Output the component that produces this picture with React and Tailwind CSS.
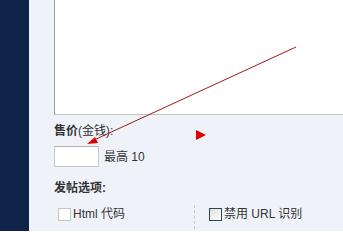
export default function App() {
  const font = { fontFamily: '"Liberation Sans", "Noto Sans CJK SC", sans-serif' };
  return (
    <div className="relative flex w-[343px] h-[231px] overflow-hidden text-[12px] text-[#333]" style={font}>
      <div className="w-[29px] shrink-0 bg-[#0f2247]" />
      <div className="flex-1 bg-[#eff3f9] pl-[25px] flex flex-col">
        <div className="h-[115px] w-[320px] shrink-0 bg-white border-l border-l-[#9a9a9a] border-b border-b-[#c6c6c6]" />
        <div className="mt-[9px] h-[14px] leading-[14px] flex items-center">
          <span className="font-bold">售价</span>
          <span>(金钱):</span>
        </div>
        <div className="mt-[8px] flex items-center">
          <div className="w-[45px] h-[21px] bg-white border border-[#c8c8c8] border-t-[#b0b0b0]" />
          <span className="ml-[5px] leading-[14px]">最高 10</span>
        </div>
        <div className="mt-[14px] h-[14px] leading-[14px] font-bold">发帖选项:</div>
        <div className="mt-[10px] flex items-start">
          <div className="w-[140px] flex items-center pl-[4px] pt-[2px]">
            <div className="w-[13px] h-[13px] bg-white border border-[#c4c4c4]" />
            <span className="ml-[2px] leading-[14px]">Html 代码</span>
          </div>
          <div className="h-[40px] border-l border-dashed border-[#c8c8c8]" />
          <div className="flex items-center pl-[14px] pt-[2px]">
            <div className="w-[13px] h-[13px] border border-[#2f4453] bg-gradient-to-br from-[#dde2dc] to-[#ffffff]" />
            <span className="ml-[2px] leading-[14px]">禁用 URL 识别</span>
          </div>
        </div>
      </div>
      <svg className="absolute left-0 top-0 pointer-events-none" width="343" height="231">
        <line x1="296" y1="47" x2="94" y2="140" stroke="#a01818" strokeWidth="1" />
        <polygon points="87,144 95,137 98,143" fill="#e00000" />
        <polygon points="196,130 206,135 196,140" fill="#e00000" />
      </svg>
    </div>
  );
}
